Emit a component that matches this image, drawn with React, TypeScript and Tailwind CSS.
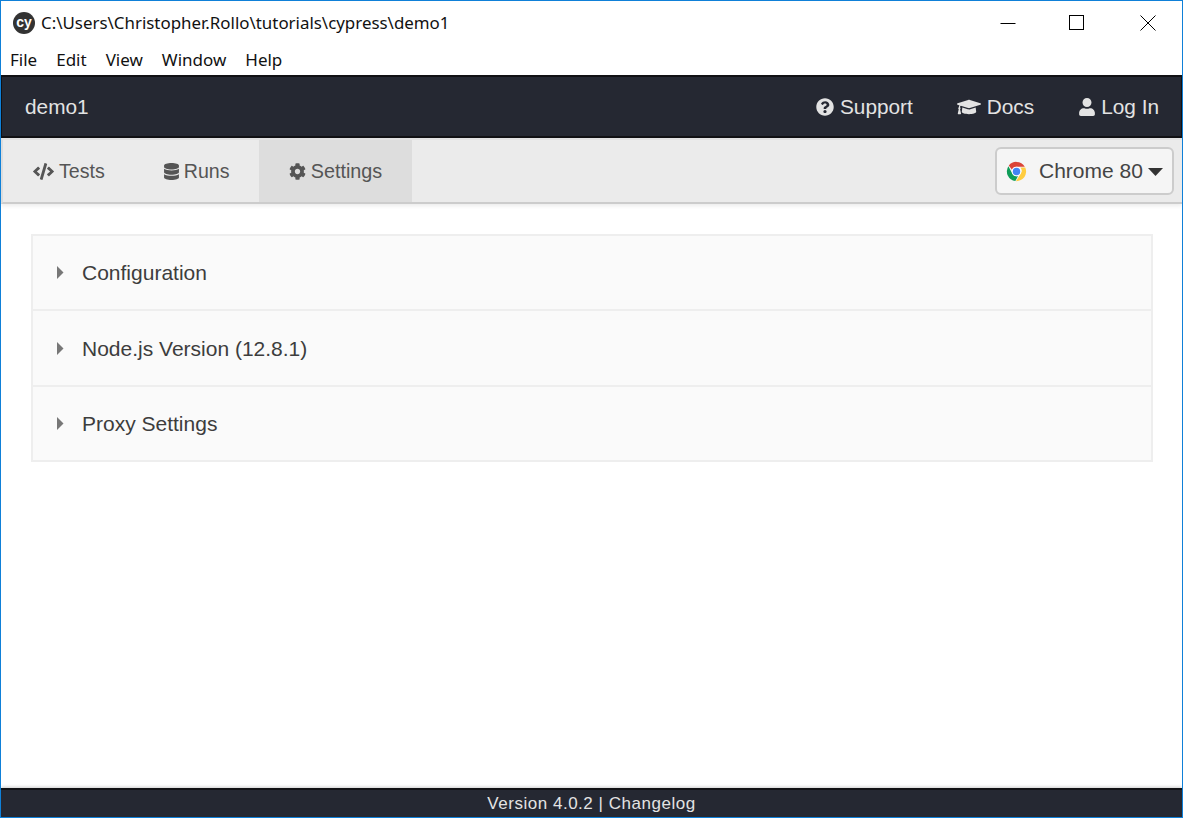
import { FaCode, FaCog, FaDatabase, FaGraduationCap, FaQuestionCircle, FaUser } from "react-icons/fa";

function ChromeLogo() {
  return (
    <svg width="21" height="21" viewBox="0 0 48 48" className="shrink-0">
      <path fill="#db4437" d="M24 2a22 22 0 0 1 19.05 11H24a11 11 0 0 0-10.3 7.1L6.4 10.2A22 22 0 0 1 24 2z" />
      <path fill="#0f9d58" d="M5.5 12 14.9 29.6A11 11 0 0 0 27.6 34.4L21.3 45.8A22 22 0 0 1 5.5 12z" />
      <path fill="#ffcd40" d="M44 15a22 22 0 0 1-21 31l9.8-16.5A11 11 0 0 0 33 15z" />
      <circle cx="24" cy="24" r="11" fill="#fff" />
      <circle cx="24" cy="24" r="8.5" fill="#4285f4" />
    </svg>
  );
}

function WindowControls() {
  return (
    <div className="flex items-center ml-auto text-black">
      <svg width="16" height="16" viewBox="0 0 16 16" className="mr-[53px]">
        <path d="M0.5 8.5h15" stroke="currentColor" fill="none" />
      </svg>
      <svg width="16" height="16" viewBox="0 0 16 16" className="mr-[55px]">
        <rect x="0.5" y="0.5" width="14" height="14" stroke="currentColor" fill="none" />
      </svg>
      <svg width="16" height="16" viewBox="0 0 16 16" className="mr-[26px]">
        <path d="M0.5 0.5l15 15M15.5 0.5l-15 15" stroke="currentColor" fill="none" />
      </svg>
    </div>
  );
}

function NavLink({ icon, label, tight }: { icon: React.ReactNode; label: string; tight?: boolean }) {
  return (
    <a className={tight ? "flex items-center gap-[5px] text-[20.8px] text-[#e3e3e3]" : "flex items-center gap-[6px] text-[20.8px] text-[#e3e3e3]"}>
      {icon}
      {label}
    </a>
  );
}

function Tab({ icon, label, active, tight }: { icon: React.ReactNode; label: string; active?: boolean; tight?: boolean }) {
  return (
    <a
      className={
        active
          ? "flex items-center justify-center gap-[5px] h-[62px] pt-px w-[153px] bg-[#dddddd] text-[#555555] text-[19.8px]"
          : tight
            ? "flex items-center justify-center gap-[4px] h-[62px] pt-px text-[#555555] text-[19.6px]"
            : "flex items-center justify-center gap-[5px] h-[62px] pt-px text-[#555555] text-[19.6px]"
      }>
      {icon}
      {label}
    </a>
  );
}

function SettingsRow({ label, rowClass }: { label: string; rowClass: string }) {
  return (
    <div className={`flex items-center pl-[24px] border-b-2 border-[#eeeeee] last:border-b-0 ${rowClass}`}>
      <svg width="7" height="13" viewBox="0 0 7 13" className="mr-[18px]">
        <path d="M0 0l6.5 6.5L0 13z" fill="#777777" />
      </svg>
      <span className="text-[21px] text-[#3d3d3d]">{label}</span>
    </div>
  );
}

export default function App() {
  return (
    <div className="w-[1183px] h-[818px] flex flex-col border border-[#0f80d8] bg-white overflow-hidden font-['Liberation_Sans',Arial,sans-serif]">
      <div className="flex items-center h-[44px] pl-[12px] font-['Noto_Sans',sans-serif] text-[16.9px] text-[#111111]">
        <div className="w-[22px] h-[22px] rounded-full bg-[#333333] text-white flex items-center justify-center text-[14px] font-bold leading-none mr-[6px] pb-[3px] font-['Liberation_Sans',sans-serif]">
          cy
        </div>
        <span>{"C:\\Users\\Christopher.Rollo\\tutorials\\cypress\\demo1"}</span>
        <WindowControls />
      </div>
      <div className="flex items-center gap-[19px] h-[30px] pl-[9px] font-['Noto_Sans',sans-serif] text-[17px] text-[#111111]">
        <span>File</span>
        <span>Edit</span>
        <span>View</span>
        <span>Window</span>
        <span>Help</span>
      </div>
      <nav className="flex items-center h-[63px] bg-[#252832] border-y-2 border-x border-[#111114] pl-[23px] pr-[22px]">
        <span className="text-[20.8px] text-[#e3e3e3]">demo1</span>
        <div className="ml-auto flex items-center gap-[44px]">
          <NavLink icon={<FaQuestionCircle className="text-[18px]" />} label="Support" />
          <NavLink icon={<FaGraduationCap className="text-[24px]" />} label="Docs" />
          <NavLink tight icon={<FaUser className="text-[18px]" />} label="Log In" />
        </div>
      </nav>
      <div className="flex items-stretch h-[66px] bg-[#ebebeb] border-y-2 border-l-2 border-t-[#e2e2e2] border-b-[#cccccc] border-l-[#dddddd] shadow-[0_2px_4px_rgba(0,0,0,0.08)]">
        <div className="flex items-center">
          <div className="flex items-center w-[256px] pl-[30px] gap-[58px]">
            <Tab icon={<FaCode className="text-[21px]" />} label="Tests" />
            <Tab tight icon={<FaDatabase className="text-[17px]" />} label="Runs" />
          </div>
          <Tab active icon={<FaCog className="text-[17px]" />} label="Settings" />
        </div>
        <div className="ml-auto flex items-center pr-[8px]">
          <button className="flex items-center h-[48px] w-[179px] pl-[9px] rounded-[6px] border-2 border-[#cccccc] bg-[#f5f5f5] text-[21px] text-[#444444]">
            <ChromeLogo />
            <span className="ml-[12px]">Chrome 80</span>
            <svg width="15" height="8" viewBox="0 0 15 8" className="ml-[5px] mt-[2px]">
              <path d="M0 0h15L7.5 8z" fill="#333333" />
            </svg>
          </button>
        </div>
      </div>
      <main className="flex-1 pt-[30px] pl-[30px] pr-[29px]">
        <div className="border-2 border-[#eeeeee] bg-[#fafafa]">
          <SettingsRow rowClass="h-[75px]" label="Configuration" />
          <SettingsRow rowClass="h-[76px] pt-px" label="Node.js Version (12.8.1)" />
          <SettingsRow rowClass="h-[73px]" label="Proxy Settings" />
        </div>
      </main>
      <footer className="h-[29px] flex items-center justify-center bg-[#252832] border-t-2 border-[#111114] text-[17px] text-[#e3e3e3] tracking-[0.52px] shadow-[0_-1px_3px_rgba(0,0,0,0.2)]">
        Version 4.0.2 | Changelog
      </footer>
    </div>
  );
}
